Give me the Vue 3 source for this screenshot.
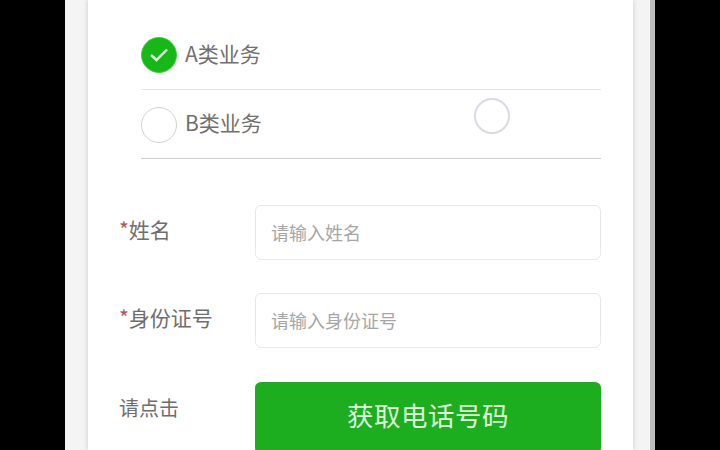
<template>
  <div class="screen">
    <div class="phone">
      <div class="card">
        <div class="radio-list">
          <div v-for="item in options" :key="item.name" class="radio-row">
            <span class="radio" :class="{ checked: item.checked }">
              <svg v-if="item.checked" width="20" height="16" viewBox="0 0 20 16">
                <path d="M2 8 L7.5 13 L18 2.5" fill="none" stroke="#e6f8e4" stroke-width="2.4" />
              </svg>
            </span>
            <span class="radio-text">{{ item.name }}</span>
          </div>
        </div>

        <div class="form">
          <div class="form-row">
            <label class="label"><i>*</i>姓名</label>
            <input class="field" type="text" placeholder="请输入姓名">
          </div>
          <div class="form-row">
            <label class="label"><i>*</i>身份证号</label>
            <input class="field" type="text" placeholder="请输入身份证号">
          </div>
          <div class="form-row">
            <label class="label plain">请点击</label>
            <button class="phone-btn" type="button">获取电话号码</button>
          </div>
        </div>
      </div>
      <!-- 屏幕录制时的触摸点 -->
      <span class="touch"></span>
    </div>
  </div>
</template>

<script setup>
const options = [
  { name: 'A类业务', checked: true },
  { name: 'B类业务', checked: false }
]
</script>

<style>
html,
body {
  margin: 0;
  background: #000;
  overflow: hidden;
}
</style>

<style scoped>
.screen {
  width: 720px;
  height: 450px;
  background: #000;
  overflow: hidden;
  font-family: "Noto Sans CJK SC", "Liberation Sans", sans-serif;
}

.phone {
  position: relative;
  box-sizing: border-box;
  width: 590px;
  height: 450px;
  margin-left: 65px;
  padding: 0 17px 0 23px;
  background: #f4f4f4;
  border-right: 5px solid #bdbdbd;
}

.card {
  box-sizing: border-box;
  height: 450px;
  padding-left: 32px;
  background: #fff;
  box-shadow: 0 0 5px rgba(0, 0, 0, 0.18);
  overflow: hidden;
}

.radio-list {
  width: 460px;
  margin-left: 21px;
  padding-top: 21px;
}

.radio-row {
  box-sizing: border-box;
  display: flex;
  align-items: center;
  gap: 8px;
  height: 69px;
  border-bottom: 1px solid #e6e6e6;
}

.radio-row:last-child {
  border-bottom-color: #cfcfcf;
}

.radio-row:last-child .radio {
  margin-top: 2px;
}

.radio {
  box-sizing: border-box;
  display: flex;
  align-items: center;
  justify-content: center;
  width: 36px;
  height: 36px;
  border: 1px solid #d2d2d2;
  border-radius: 50%;
}

.radio.checked {
  background: #16b716;
  border-color: #3fd03f;
}

.radio-text {
  padding-bottom: 4px;
  font-size: 21px;
  line-height: 30px;
  color: #707070;
}

.form {
  padding-top: 46px;
}

.form-row {
  display: flex;
  margin-bottom: 33px;
}

.form-row:nth-child(2) {
  margin-bottom: 34px;
}

.label {
  width: 136px;
  margin-left: -1px;
  padding-top: 8px;
  font-size: 21px;
  line-height: 32px;
  color: #6e6e6e;
}

.label i {
  font-style: normal;
  color: #b5545a;
}

.label.plain {
  padding-top: 10px;
  font-size: 20px;
}

.field {
  box-sizing: border-box;
  width: 346px;
  height: 55px;
  padding: 0 16px 2px 15px;
  border: 1px solid #e8e8e8;
  border-radius: 6px;
  font-family: inherit;
  font-size: 18px;
  color: #666;
  outline: none;
}

.field::placeholder {
  color: #a6a6a6;
}

.phone-btn {
  width: 346px;
  height: 72px;
  padding: 0 0 9px;
  background: #1dae1f;
  border: none;
  border-top: 1px solid #2f9c2f;
  border-radius: 6px;
  font-family: inherit;
  font-size: 26.5px;
  letter-spacing: 0.5px;
  color: #dff6dc;
}

.touch {
  position: absolute;
  left: 409px;
  top: 98px;
  box-sizing: border-box;
  width: 36px;
  height: 36px;
  border: 2px solid #d9d9e8;
  border-radius: 50%;
}
</style>
